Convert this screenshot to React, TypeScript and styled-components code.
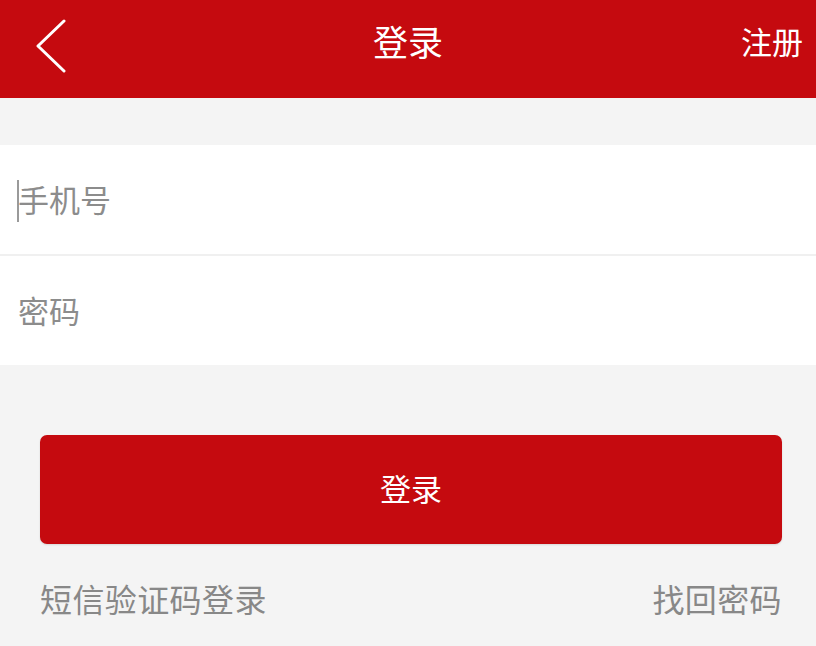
import React from "react";
import styled, { createGlobalStyle } from "styled-components";

const Global = createGlobalStyle`
  html, body { margin: 0; padding: 0; background: #f4f4f4; }
  body { font-family: "Noto Sans CJK SC", "Noto Sans", sans-serif; }
  * { box-sizing: border-box; }
`;

const RED = "#c50a0f";

const Page = styled.div`
  width: 816px;
  height: 646px;
  background: #f4f4f4;
  display: flex;
  flex-direction: column;
  overflow: hidden;
`;

const Header = styled.header`
  height: 98px;
  background: ${RED};
  display: grid;
  grid-template-columns: 120px 1fr 120px;
  align-items: center;
  color: #fff;
`;

const BackButton = styled.button`
  background: none;
  border: none;
  padding: 0 0 6px 36px;
  height: 98px;
  display: flex;
  align-items: center;
  justify-self: start;
  cursor: pointer;
`;

const Title = styled.h1`
  margin: 0;
  font-size: 35px;
  font-weight: 400;
  text-align: center;
  line-height: 1;
  padding-bottom: 17px;
`;

const HeaderLink = styled.span`
  justify-self: end;
  font-size: 31px;
  line-height: 1;
  padding-right: 13px;
  padding-bottom: 17px;
`;

const Form = styled.div`
  margin-top: 47px;
  display: flex;
  flex-direction: column;
  gap: 2px;
  background: #f0f0f0;
`;

const Field = styled.label`
  height: 109px;
  background: #fff;
  display: flex;
  align-items: center;
  padding-left: 17px;
`;

const Caret = styled.span<{ $show?: boolean }>`
  width: 2px;
  height: 42px;
  background: ${(p) => (p.$show ? "#9a9a9a" : "transparent")};
  flex: none;
  margin-top: 2px;
`;

const Input = styled.input`
  flex: 1;
  border: none;
  outline: none;
  background: transparent;
  font-family: inherit;
  font-size: 31px;
  color: #333;
  padding: 0;
  margin-left: -1px;
  margin-top: -3px;
  &::placeholder { color: #8c8c8c; }
`;

const Actions = styled.div`
  padding: 70px 34px 0 40px;
  display: flex;
  flex-direction: column;
`;

const LoginButton = styled.button`
  height: 109px;
  border: none;
  border-radius: 7px;
  background: ${RED};
  color: #fff;
  font-family: inherit;
  font-size: 31px;
  box-shadow: 0 1px 2px rgba(0, 0, 0, 0.12);
  cursor: pointer;
  padding-bottom: 6px;
`;

const LinkRow = styled.div`
  margin-top: 38px;
  display: flex;
  justify-content: space-between;
  font-size: 32px;
  color: #888;
  line-height: 1;
`;

const TextLink = styled.span`
  letter-spacing: 0.4px;
`;

export default function App() {
  return (
    <Page>
      <Global />
      <Header>
        <BackButton aria-label="返回">
          <svg width="30" height="54" viewBox="0 0 30 54">
            <polyline
              points="28,2 2,27 28,52"
              fill="none"
              stroke="#fff"
              strokeWidth="3"
              strokeLinecap="round"
              strokeLinejoin="round"
            />
          </svg>
        </BackButton>
        <Title>登录</Title>
        <HeaderLink>注册</HeaderLink>
      </Header>
      <Form>
        <Field>
          <Caret $show />
          <Input placeholder="手机号" />
        </Field>
        <Field>
          <Caret />
          <Input type="password" placeholder="密码" />
        </Field>
      </Form>
      <Actions>
        <LoginButton>登录</LoginButton>
        <LinkRow>
          <TextLink>短信验证码登录</TextLink>
          <TextLink>找回密码</TextLink>
        </LinkRow>
      </Actions>
    </Page>
  );
}
